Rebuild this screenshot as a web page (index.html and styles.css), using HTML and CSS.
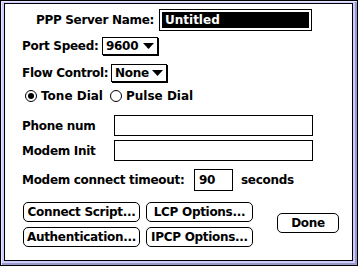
FILE: index.html
```html
<!DOCTYPE html>
<html>
<head>
    <title>PPP Configuration</title>
    <link rel="stylesheet" href="styles.css">
</head>
<body>
    <!-- the dialog frame -->
    <div class="window">
        <div class="dialog">

            <div class="row row-name">
                <span class="label label-name">PPP Server Name:</span>
                <span class="field field-name"><span class="selected">Untitled</span></span>
            </div>

            <div class="row row-speed">
                <span class="label label-speed">Port Speed:</span>
                <span class="popup popup-speed">9600
                    <svg class="arrow" width="11" height="6" viewBox="0 0 11 6"><polygon points="0,0 11,0 5.5,6" fill="#000"/></svg>
                </span>
            </div>

            <div class="row row-flow">
                <span class="label label-flow">Flow Control:</span>
                <span class="popup popup-flow">None
                    <svg class="arrow" width="11" height="6" viewBox="0 0 11 6"><polygon points="0,0 11,0 5.5,6" fill="#000"/></svg>
                </span>
            </div>

            <div class="row row-dial">
                <span class="radio on"></span><span class="radio-label tone">Tone Dial</span>
                <span class="radio"></span><span class="radio-label">Pulse Dial</span>
            </div>

            <div class="row row-phone">
                <span class="label label-wide">Phone num</span>
                <span class="field field-wide"></span>
            </div>

            <div class="row row-init">
                <span class="label label-wide">Modem Init</span>
                <span class="field field-wide"></span>
            </div>

            <div class="row row-timeout">
                <span class="label label-timeout">Modem connect timeout:</span>
                <span class="field field-small">90</span>
                <span class="label unit">seconds</span>
            </div>

            <!-- the buttons -->
            <div class="buttons">
                <div class="button-grid">
                    <span class="button">Connect Script...</span>
                    <span class="button">LCP Options...</span>
                    <span class="button">Authentication...</span>
                    <span class="button">IPCP Options...</span>
                </div>
                <span class="button done">Done</span>
            </div>

        </div>
    </div>
</body>
</html>
```

FILE: styles.css
```css
/* page */
body {
    margin: 0;
    padding: 0;
    background: #fff;
    font-family: "DejaVu Sans", sans-serif;
    font-weight: bold;
    font-size: 12px;
    letter-spacing: -0.3px;
    color: #000;
}

/* the window frame: black line, lavender band, black line */
.window {
    width: 358px;
    height: 266px;
    box-sizing: border-box;
    border: 1px solid #000;
    background: #ccccff;
    box-shadow: inset 1px 1px 0 #e6e6ff, inset -2px -2px 0 #9999cc;
    padding: 2px 4px 4px 3px;
}

.dialog {
    height: 100%;
    box-sizing: border-box;
    border: 1px solid #000;
    background: #fff;
    padding: 5px 0 0 17px;
}

/* rows */
.row {
    display: flex;
    align-items: center;
    white-space: nowrap;
}

.row-name { height: 22px; }
.row-speed { height: 18px; margin-top: 6px; }
.row-flow { height: 18px; margin-top: 9px; }
.row-dial { height: 13px; margin-top: 7px; }
.row-phone { height: 21px; margin-top: 13px; }
.row-init { height: 21px; margin-top: 4px; }
.row-timeout { height: 22px; margin-top: 8px; }

.label {
    display: inline-block;
}

.label-name {
    width: 132px;
    text-align: right;
    margin-right: 5px;
}

.label-speed { width: 80px; }
.label-flow { width: 89px; }
.label-wide { width: 92px; }
.label-timeout { width: 172px; }
.unit { margin-left: 8px; }

/* text fields */
.field {
    display: inline-block;
    box-sizing: border-box;
    height: 100%;
    border: 1px solid #000;
    background: #fff;
}

.field-name {
    width: 153px;
    background: #000;
    box-shadow: inset 0 0 0 2px #fff;
    color: #fff;
    padding: 3px 0 0 5px;
    letter-spacing: 0;
}

.field-wide { width: 199px; }

.field-small {
    width: 39px;
    padding: 3px 0 0 4px;
}

/* popup menus */
.popup {
    display: flex;
    align-items: center;
    box-sizing: border-box;
    height: 18px;
    border: 1px solid #000;
    box-shadow: 1px 1px 0 #000;
    padding: 0 0 0 3px;
}

.popup-speed { width: 56px; }
.popup-flow { width: 56px; }

.arrow {
    margin-left: auto;
    margin-right: 3px;
}

/* radio buttons */
.radio {
    display: inline-block;
    box-sizing: border-box;
    width: 12px;
    height: 12px;
    border: 1px solid #000;
    border-radius: 50%;
    margin-left: 3px;
    position: relative;
}

.radio.on::after {
    content: "";
    position: absolute;
    left: 2px;
    top: 2px;
    width: 6px;
    height: 6px;
    border-radius: 50%;
    background: #000;
}

.radio-label {
    margin-left: 4px;
    letter-spacing: 0;
}

.radio-label.tone {
    width: 66px;
}

/* buttons */
.buttons {
    display: flex;
    align-items: center;
    margin-top: 11px;
}

.button-grid {
    display: grid;
    grid-template-columns: 117px 107px;
    grid-auto-rows: 20px;
    column-gap: 6px;
    row-gap: 5px;
    margin-left: 1px;
}

.button {
    box-sizing: border-box;
    border: 1px solid #000;
    border-radius: 5px;
    display: flex;
    align-items: center;
    justify-content: center;
    white-space: nowrap;
}

.done {
    width: 62px;
    height: 20px;
    margin-left: 24px;
    margin-top: -3px;
}
```
